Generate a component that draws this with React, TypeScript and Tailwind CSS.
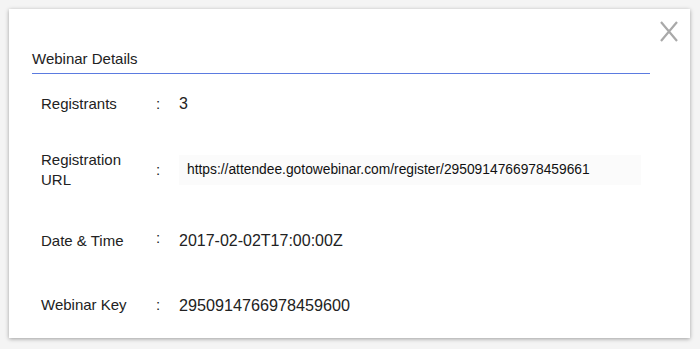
export default function App() {
  const font = { fontFamily: '"Liberation Sans", Arial, sans-serif' }
  return (
    <div className="w-[700px] h-[349px] bg-[#f4f4f4] p-[9px] pr-[10px] pb-[11px]" style={font}>
      <div className="relative h-full bg-white shadow-[0_1px_4px_rgba(0,0,0,0.35)]">
        {/* Close */}
        <button className="absolute right-[11px] top-[12px] w-[20px] h-[21px] text-[#a9a9a9]">
          <svg viewBox="0 0 20 21" className="w-full h-full" fill="none" stroke="currentColor" strokeWidth="2.2">
            <path d="M2 1 L18 20 M18 1 L2 20" />
          </svg>
        </button>

        {/* Header */}
        <div className="pt-[41px] pl-[23px] pr-[40px]">
          <h2 className="text-[15px] text-[#222] leading-[18px] pb-[5px] border-b border-[#5b7be0]">Webinar Details</h2>
        </div>

        {/* Rows */}
        <div className="pl-[32px] text-[15px] text-[#222]">
          <div className="flex items-center h-[32px] mt-[14px]">
            <div className="w-[115px]">Registrants</div>
            <div className="w-[23px]">:</div>
            <div className="text-[16px]">3</div>
          </div>
          <div className="flex items-center mt-[30px]">
            <div className="w-[115px] leading-[20px]">Registration<br />URL</div>
            <div className="w-[23px]">:</div>
            <div className="w-[462px] h-[30px] bg-[#fbfbfb] flex items-center pl-[8px] text-[13.8px] text-[#111]">
              https://attendee.gotowebinar.com/register/2950914766978459661
            </div>
          </div>
          <div className="flex items-center h-[24px] mt-[39px]">
            <div className="w-[115px]">Date &amp; Time</div>
            <div className="w-[23px] -mt-[6px]">:</div>
            <div className="text-[16px]">2017-02-02T17:00:00Z</div>
          </div>
          <div className="flex items-center h-[24px] mt-[40px]">
            <div className="w-[115px]">Webinar Key</div>
            <div className="w-[23px]">:</div>
            <div className="text-[16.2px]">2950914766978459600</div>
          </div>
        </div>
      </div>
    </div>
  )
}
